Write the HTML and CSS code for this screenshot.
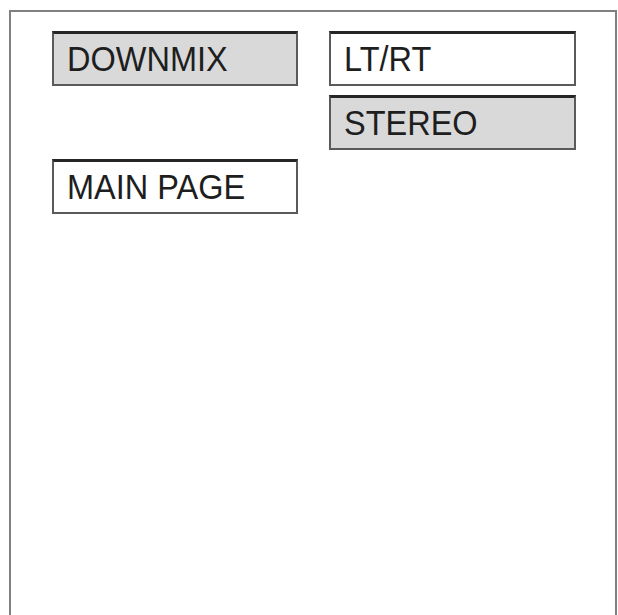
FILE: index.html
```html
<!DOCTYPE html>
<html>
<head>
<meta charset="utf-8">
<link rel="stylesheet" href="styles.css">
</head>
<body>
<div class="frame">
  <div class="grid">
    <div class="btn sel"><span class="label">DOWNMIX</span></div>
    <div class="btn"><span class="label">LT/RT</span></div>
    <div class="empty"></div>
    <div class="btn sel"><span class="label">STEREO</span></div>
    <div class="btn"><span class="label">MAIN PAGE</span></div>
    <div class="empty"></div>
  </div>
</div>
</body>
</html>
```
FILE: styles.css
```css
html, body {
  margin: 0;
  padding: 0;
  background: #fff;
}
body {
  width: 618px;
  height: 615px;
  overflow: hidden;
}
.frame {
  margin: 10px 0 0 9px;
  width: 608px;
  height: 605px;
  border: 2px solid #808080;
  border-bottom: none;
  padding: 19px 0 0 41px;
  box-sizing: border-box;
}
.grid {
  display: grid;
  grid-template-columns: 246px 247px;
  grid-auto-rows: 55px;
  column-gap: 31px;
  row-gap: 9px;
}
.btn {
  box-sizing: border-box;
  border: 2px solid #5a5a5a;
  border-top: 3px solid #262626;
  background: #fff;
  display: flex;
  align-items: center;
  padding: 0 0 0 13px;
  font-family: "Liberation Sans", Arial, sans-serif;
  font-size: 32.5px;
  color: #1e1e1e;
  line-height: 1;
}
.label {
  display: inline-block;
  transform: scaleY(1.08);
}
.btn.sel {
  background: #d9d9d9;
}
```
